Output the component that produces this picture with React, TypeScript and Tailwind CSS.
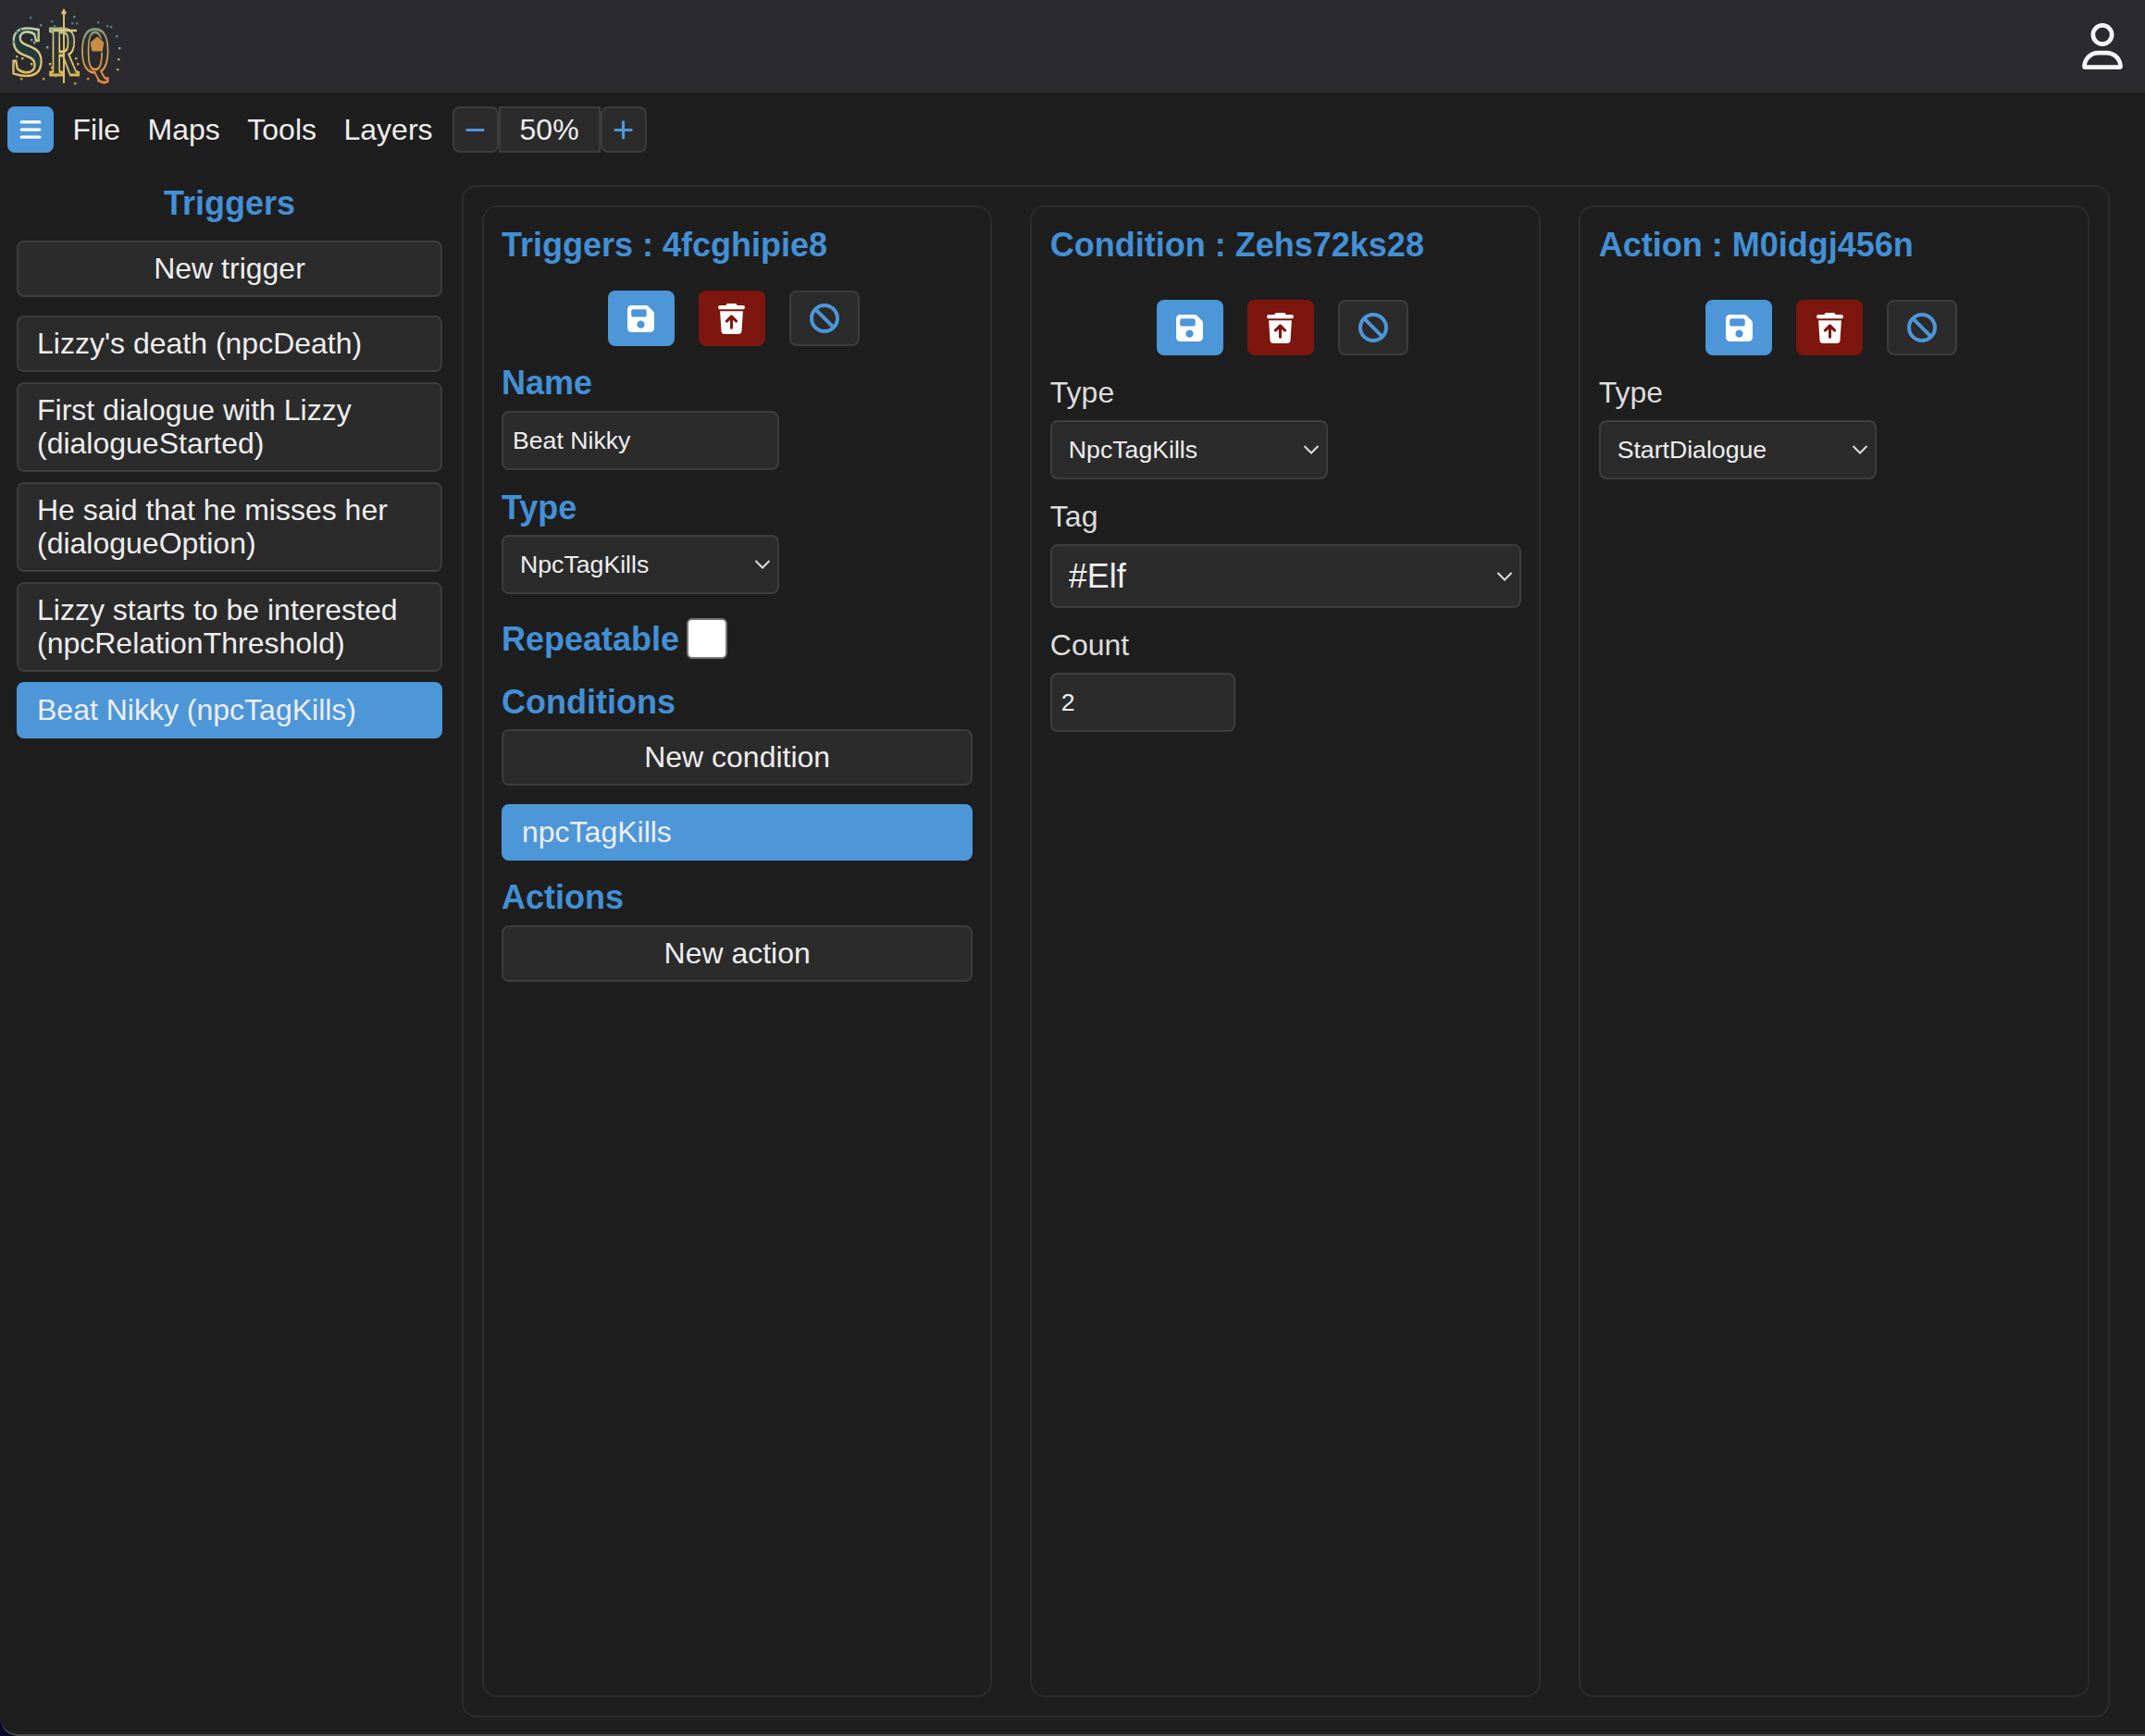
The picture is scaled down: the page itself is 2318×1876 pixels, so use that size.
import React from "react";
import { FaBars, FaMinus, FaPlus, FaFloppyDisk, FaTrashArrowUp, FaBan, FaRegUser } from "react-icons/fa6";

function Logo() {
  const dots: [number, number, string][] = [
    [14, 33, "#3f7f86"], [18, 31, "#3f7f86"], [29, 18, "#3f7f86"], [40, 26, "#4b8f90"], [11, 44, "#4b8f90"],
    [30, 42, "#7fa7a0"], [33, 45, "#7fa7a0"], [47, 50, "#7fa7a0"], [14, 60, "#b9a35c"], [20, 62, "#d8b45c"],
    [30, 68, "#d8b45c"], [10, 70, "#c9a655"], [19, 84, "#d19a45"], [43, 84, "#d19a45"], [52, 22, "#3f7f86"],
    [55, 27, "#3f7f86"], [76, 17, "#4b8f90"], [79, 24, "#3f7f86"], [74, 24, "#3f7f86"], [50, 68, "#d8b45c"],
    [52, 72, "#d8b45c"], [78, 62, "#c9a655"], [80, 68, "#c9a655"], [78, 76, "#c9a655"], [56, 81, "#d19a45"],
    [77, 89, "#d98b3a"], [91, 84, "#d98b3a"], [102, 86, "#d98b3a"], [112, 27, "#3f7f86"], [116, 28, "#3f7f86"],
    [122, 38, "#4b8f90"], [125, 51, "#7fa7a0"], [124, 63, "#c9a655"], [123, 74, "#d19a45"], [102, 23, "#3f7f86"],
  ];
  return (
    <svg width="130" height="100" viewBox="0 0 130 100" aria-label="SRQ logo" className="shrink-0">
      <defs>
        <linearGradient id="logoS" x1="0" y1="0" x2="0" y2="1">
          <stop offset="0" stopColor="#a9d0c8" />
          <stop offset="0.5" stopColor="#d8c884" />
          <stop offset="1" stopColor="#eeb04a" />
        </linearGradient>
        <linearGradient id="logoR" x1="0" y1="0" x2="0" y2="1">
          <stop offset="0" stopColor="#6aa8a4" />
          <stop offset="0.45" stopColor="#e8cf80" />
          <stop offset="1" stopColor="#d9a548" />
        </linearGradient>
        <linearGradient id="logoQ" x1="0" y1="0" x2="0" y2="1">
          <stop offset="0" stopColor="#4b8f90" />
          <stop offset="0.5" stopColor="#d0a85a" />
          <stop offset="1" stopColor="#e8823a" />
        </linearGradient>
      </defs>
      <text transform="translate(8 81) scale(0.86 1)" fontFamily="'Liberation Serif', serif" fontWeight="700" fontSize="76" fill="#24393a" stroke="url(#logoS)" strokeWidth="2.6">S</text>
      <text transform="translate(50 81) scale(0.58 1)" fontFamily="'Liberation Serif', serif" fontWeight="700" fontSize="76" fill="#2c3532" stroke="url(#logoR)" strokeWidth="2.8">R</text>
      <text transform="translate(84 78) scale(0.58 1)" fontFamily="'Liberation Serif', serif" fontWeight="700" fontSize="70" fill="#2e2f2e" stroke="url(#logoQ)" strokeWidth="2.8">Q</text>
      <path d="M66 9 L69 14 L67 16 L67 90 L65 90 L65 16 L63 14 Z" fill="#d8c070" />
      <path d="M54 33 H80" stroke="#e0c878" strokeWidth="2.4" />
      <path d="M102 39 L110 46 L108 56 L96 56 L94 46 Z" fill="#c98d46" stroke="#26282a" strokeWidth="1" />
      {dots.map(([x, y, c], i) => (
        <rect key={i} x={x} y={y} width="2.4" height="2.4" fill={c} />
      ))}
    </svg>
  );
}

const btn = "border-2 border-[#3d3d3d] bg-[#2b2b2b] rounded-[8px]";

function ListButton({ children, active, center }: { children: React.ReactNode; active?: boolean; center?: boolean }) {
  return (
    <button
      type="button"
      className={
        active
          ? "w-full block rounded-[8px] border-2 border-[#4d97d9] bg-[#4d97d9] px-[20px] py-[10.25px] text-left text-[32px] leading-[36.5px] text-[#eeeeee]"
          : center
          ? "w-full block rounded-[8px] border-2 border-[#3d3d3d] bg-[#2b2b2b] px-[20px] py-[10.25px] text-center text-[32px] leading-[36.5px] text-[#eeeeee]"
          : "w-full block rounded-[8px] border-2 border-[#3d3d3d] bg-[#2b2b2b] px-[20px] py-[10.25px] text-left text-[32px] leading-[36.5px] text-[#eeeeee]"
      }
    >
      {children}
    </button>
  );
}

function ActionButtons({ className }: { className: string }) {
  return (
    <div className={className}>
      <button type="button" className="flex h-[60px] w-[72px] items-center justify-center rounded-[8px] bg-[#4d97d9] text-white">
        <FaFloppyDisk size={33} />
      </button>
      <button type="button" className="flex h-[60px] w-[72px] items-center justify-center rounded-[8px] bg-[#7d160e] text-white">
        <FaTrashArrowUp size={33} />
      </button>
      <button type="button" className="flex h-[60px] w-[76px] items-center justify-center rounded-[8px] border-2 border-[#3d3d3d] bg-[#2b2b2b] text-[#4d97d9]">
        <FaBan size={32} />
      </button>
    </div>
  );
}

function Chevron() {
  return (
    <svg
      className="pointer-events-none absolute right-[9px] top-1/2 -translate-y-1/2"
      width="18"
      height="11"
      viewBox="0 0 18 11"
      fill="none"
      stroke="#dddddd"
      strokeWidth="2"
    >
      <path d="M1.5 1.5 L9 9 L16.5 1.5" />
    </svg>
  );
}

function Select({ value, wide }: { value: string; wide?: boolean }) {
  return (
    <div className={wide ? "relative mt-[11px] w-full" : "relative w-[300px]"}>
      <select
        defaultValue={value}
        className={
          wide
            ? "block h-[69px] w-full appearance-none rounded-[8px] border-2 border-[#3d3d3d] bg-[#2b2b2b] pl-[18px] text-[36px] text-[#eeeeee] outline-none"
            : "block h-[64px] w-full appearance-none rounded-[8px] border-2 border-[#3d3d3d] bg-[#2b2b2b] pl-[18px] text-[26.67px] text-[#eeeeee] outline-none"
        }
      >
        <option>{value}</option>
      </select>
      <Chevron />
    </div>
  );
}

const heading = "h-[44px] text-[36px] font-bold leading-[44px] text-[#4390d6]";
const label = "text-[36px] font-bold leading-[41px] text-[#4390d6]";
const plainLabel = "mt-[22px] text-[32px] leading-[37px] text-[#dddddd]";
const column = "rounded-[16px] border-2 border-[#2c2c2c] pl-[19.5px] pr-[19px] pt-[18.5px]";

const triggers = [
  "Lizzy's death (npcDeath)",
  "First dialogue with Lizzy (dialogueStarted)",
  "He said that he misses her (dialogueOption)",
  "Lizzy starts to be interested (npcRelationThreshold)",
];

export default function App() {
  return (
    <div className="h-[1876px] w-full overflow-hidden bg-[#0b0726] font-['Liberation_Sans',Arial,sans-serif]">
      <div className="h-[1876px] overflow-hidden rounded-bl-[20px] border-b-2 border-[#4a4a4a] bg-[#1e1e1e]">
        <header className="flex h-[100px] items-center justify-between bg-[#2a2a2f] pl-[3px] pr-[21px]">
          <Logo />
          <FaRegUser size={50} color="#f5f5f5" />
        </header>

        <nav className="mt-[15px] flex h-[50px] items-center pl-[8px] text-[32px] text-[#eeeeee]">
          <button type="button" className="flex h-[50px] w-[50px] items-center justify-center rounded-[8px] bg-[#4d97d9] text-white">
            <FaBars size={26} />
          </button>
          <div className="ml-[20.5px] flex gap-[29.5px]">
            <span>File</span>
            <span>Maps</span>
            <span>Tools</span>
            <span>Layers</span>
          </div>
          <div className="ml-[21px] flex">
            <button type="button" className={`flex h-[50px] w-[50px] items-center justify-center ${btn} text-[#4d97d9]`}>
              <FaMinus size={25} />
            </button>
            <div className="flex h-[50px] w-[110px] items-center justify-center border-2 border-[#3d3d3d] bg-[#2b2b2b]">50%</div>
            <button type="button" className={`flex h-[50px] w-[50px] items-center justify-center ${btn} text-[#4d97d9]`}>
              <FaPlus size={25} />
            </button>
          </div>
        </nav>

        <div className="mt-[35px] flex">
          <aside className="w-[499px] shrink-0 pl-[18px] pr-[21px]">
            <h2 className="h-[60px] text-center text-[36px] font-bold leading-[40px] text-[#4390d6]">Triggers</h2>
            <ListButton center>New trigger</ListButton>
            <div className="mt-[20px] flex flex-col gap-[10.5px]">
              {triggers.map((t) => (
                <ListButton key={t}>{t}</ListButton>
              ))}
              <ListButton active>Beat Nikky (npcTagKills)</ListButton>
            </div>
          </aside>

          <main className="grid h-[1656px] w-[1781px] grid-cols-3 gap-[41px] rounded-[16px] border-2 border-[#2c2c2c] py-[20px] pl-[19.5px] pr-[20px]">
            <section className={column}>
              <h2 className={heading}>Triggers : 4fcghipie8</h2>
              <ActionButtons className="mt-[27.5px] flex justify-center gap-[26px] pr-[8px]" />
              <div className={`mt-[19px] ${label}`}>Name</div>
              <input
                defaultValue="Beat Nikky"
                className="mt-[10px] block h-[64px] w-[300px] rounded-[8px] border-2 border-[#3d3d3d] bg-[#2b2b2b] px-[10px] text-[26.67px] text-[#eeeeee] outline-none"
              />
              <div className={`mt-[20px] ${label}`}>Type</div>
              <div className="mt-[9px]">
                <Select value="NpcTagKills" />
              </div>
              <div className="mt-[26px] flex h-[44px] items-center gap-[8px]">
                <span className={label}>Repeatable</span>
                <input type="checkbox" className="h-[44px] w-[44px] appearance-none rounded-[6px] border-2 border-[#767676] bg-white" />
              </div>
              <div className={`mt-[26px] ${label}`}>Conditions</div>
              <div className="mt-[9px]">
                <ListButton center>New condition</ListButton>
              </div>
              <div className="mt-[20px]">
                <ListButton active>npcTagKills</ListButton>
              </div>
              <div className={`mt-[19px] ${label}`}>Actions</div>
              <div className="mt-[10px]">
                <ListButton center>New action</ListButton>
              </div>
            </section>

            <section className={column}>
              <h2 className={heading}>Condition : Zehs72ks28</h2>
              <ActionButtons className="mt-[37.5px] flex justify-center gap-[26px] pr-[7px]" />
              <div className={plainLabel}>Type</div>
              <div className="mt-[11px]">
                <Select value="NpcTagKills" />
              </div>
              <div className={plainLabel}>Tag</div>
              <Select value="#Elf" wide />
              <div className={plainLabel}>Count</div>
              <input
                type="text"
                defaultValue="2"
                className="mt-[11px] block h-[64px] w-[200px] rounded-[8px] border-2 border-[#3d3d3d] bg-[#2b2b2b] px-[10px] text-[26.67px] text-[#eeeeee] outline-none"
              />
            </section>

            <section className={column}>
              <h2 className={heading}>Action : M0idgj456n</h2>
              <ActionButtons className="mt-[37.5px] flex justify-center gap-[26px] pr-[6px]" />
              <div className={plainLabel}>Type</div>
              <div className="mt-[11px]">
                <Select value="StartDialogue" />
              </div>
            </section>
          </main>
        </div>
      </div>
    </div>
  );
}
